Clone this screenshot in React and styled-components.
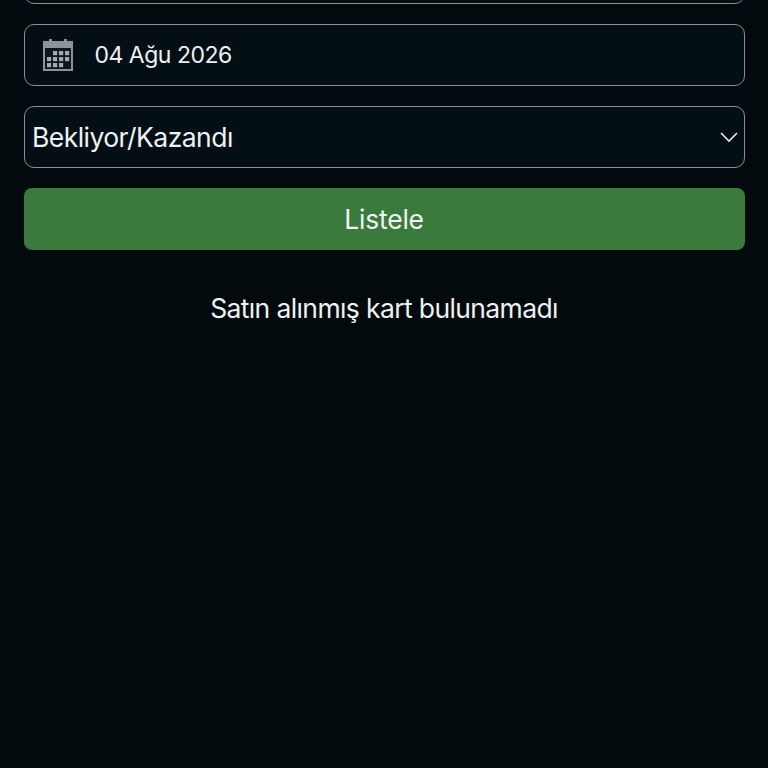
import React from "react";
import styled, { createGlobalStyle } from "styled-components";

const Global = createGlobalStyle`
  html, body { margin: 0; padding: 0; background: #020a0e; height: 768px; overflow: hidden; }
  * { box-sizing: border-box; }
`;

const Page = styled.main`
  width: 768px;
  height: 768px;
  overflow: hidden;
  background: #020a0e;
  font-family: "Inter", "Liberation Sans", sans-serif;
  color: #eef2f2;
`;

const Form = styled.div`
  display: flex;
  flex-direction: column;
  gap: 20px;
  margin-top: -58px;
  padding: 0 23.5px 0 23.5px;
`;

const Field = styled.div`
  height: 62px;
  display: flex;
  align-items: center;
  background: #040f15;
  border: 1.5px solid #8a9094;
  border-radius: 10px;
  padding: ${(p) => p.$padding || "0 8px"};
`;

const DateText = styled.span`
  font-size: 23px;
  letter-spacing: -0.5px;
  margin-left: 22px;
  font-weight: 400;
`;

const SelectText = styled.span`
  flex: 1;
  font-size: 26.5px;
  letter-spacing: -0.55px;
  font-weight: 400;
`;

const ListButton = styled.button`
  height: 62px;
  border: none;
  border-radius: 8px;
  background: #3a7a3c;
  color: #eef2f2;
  font-family: inherit;
  font-size: 26.5px;
  letter-spacing: -0.2px;
  font-weight: 400;
`;

const Empty = styled.p`
  margin: 40px 0 0;
  text-align: center;
  font-size: 26.5px;
  line-height: 36px;
  letter-spacing: -0.62px;
`;

const CalendarIcon = () => (
  <svg width="30" height="32" viewBox="0 0 30 32" style={{ display: "block" }}>
    <path fill="#8d9397" d="M0 2h6V0h3v2h12V0h3v2h6v30H0z" />
    <rect x="2" y="9" width="26" height="21" fill="#0b171d" />
    {[
      [10, 12], [16, 12], [22, 12],
      [4, 18], [10, 18], [16, 18], [22, 18],
      [4, 24], [10, 24], [16, 24],
    ].map(([x, y]) => (
      <rect key={`${x}-${y}`} x={x} y={y} width="4.2" height="4.2" fill="#a2a8ab" />
    ))}
  </svg>
);

const Chevron = () => (
  <svg width="18" height="12" viewBox="0 0 18 12" fill="none" style={{ display: "block" }}>
    <path d="M1 2l8 8 8-8" stroke="#e6eaeb" strokeWidth="1.6" />
  </svg>
);

export default function App() {
  return (
    <Page>
      <Global />
      <Form>
        <Field />
        <Field $padding="0 0 0 18px">
          <CalendarIcon />
          <DateText>04 Ağu 2026</DateText>
        </Field>
        <Field $padding="0 6px 0 7.5px">
          <SelectText>Bekliyor/Kazandı</SelectText>
          <Chevron />
        </Field>
        <ListButton>Listele</ListButton>
      </Form>
      <Empty>Satın alınmış kart bulunamadı</Empty>
    </Page>
  );
}
